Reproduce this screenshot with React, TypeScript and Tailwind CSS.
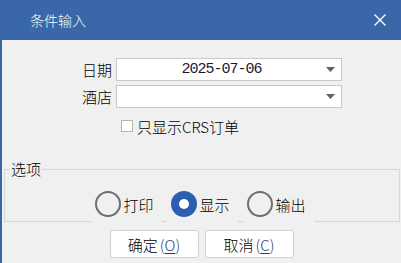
import React, { useState } from 'react';

const cjk = { fontFamily: '"Noto Sans CJK SC", "Noto Sans", sans-serif' };

// small filled triangle used by the combo boxes
const Caret = () => <svg width="9" height="5" viewBox="0 0 9 5" className="shrink-0">
    <path d="M0 0 H9 L4.5 5 Z" fill="#5f6360" />
  </svg>;

interface ComboProps {
  value?: string;
}
const Combo: React.FC<ComboProps> = ({ value }) => <div className="flex h-[23px] w-[226px] items-center border border-[#c8c8c8] bg-white pr-[6px]">
    <div className="flex-1 text-center text-[15px] font-normal leading-none tracking-[-1px] text-[#1a1a2e]" style={{ fontFamily: '"Liberation Mono", monospace' }}>
      {value}
    </div>
    <Caret />
  </div>;

interface RadioProps {
  label: string;
  checked: boolean;
  onClick: () => void;
}
const Radio: React.FC<RadioProps> = ({ label, checked, onClick }) => <div onClick={onClick} className="flex h-[36px] w-[71px] cursor-default items-center bg-[#f0f0f0] pl-[4px]">
    {checked ? <div className="flex h-[26px] w-[26px] items-center justify-center rounded-full bg-[#2c5fb1]">
        <div className="h-[10px] w-[10px] rounded-full bg-white" />
      </div> : <div className="h-[26px] w-[26px] rounded-full border-2 border-[#6e6e6e] bg-[#f0f0f0]" />}
    <span className="ml-[3px] text-[15px] leading-none text-black">{label}</span>
  </div>;

export default function App() {
  const [mode, setMode] = useState('display');
  const [crsOnly, setCrsOnly] = useState(false);
  return <div className="h-[263px] w-[401px] overflow-hidden border-l-2 border-[#3a67a8] bg-[#f0f0f0] font-light select-none" style={cjk}>
      {/* Title bar */}
      <div className="flex h-[40px] items-center justify-between bg-[#3a67a8] pl-[28px] pr-[15px]">
        <span className="text-[14px] text-white">条件输入</span>
        <svg width="12" height="12" viewBox="0 0 12 12">
          <path d="M0.5 0.5 L11.5 11.5 M11.5 0.5 L0.5 11.5" stroke="white" strokeWidth="1.4" />
        </svg>
      </div>

      {/* Filters */}
      <div className="flex flex-col gap-[4px] pt-[18px]">
        <div className="flex items-center">
          <span className="w-[111px] pr-[1px] text-right text-[15px] leading-none text-black">日期</span>
          <div className="ml-[3px]"><Combo value="2025-07-06" /></div>
        </div>
        <div className="flex items-center">
          <span className="w-[111px] pr-[1px] text-right text-[15px] leading-none text-black">酒店</span>
          <div className="ml-[3px]"><Combo /></div>
        </div>
      </div>
      <div className="mt-[10px] flex h-[16px] items-center pl-[119px]" onClick={() => setCrsOnly(!crsOnly)}>
        <div className="flex h-[12px] w-[12px] items-center justify-center border border-[#b4b4b4] bg-white text-[10px] leading-none text-[#333]">
          {crsOnly ? '✓' : ''}
        </div>
        <span className="ml-[4px] text-[15px] leading-none text-black">只显示CRS订单</span>
      </div>

      {/* Options group */}
      <fieldset className="ml-[2px] mr-[1px] mt-[26px] border border-[#d6d6d6]">
        <legend className="ml-[5px] px-[1px] text-[15px] leading-[18px] text-black">选项</legend>
        <div className="mb-[-1px] mt-[8px] flex justify-center gap-[5px]">
          <Radio label="打印" checked={mode === 'print'} onClick={() => setMode('print')} />
          <Radio label="显示" checked={mode === 'display'} onClick={() => setMode('display')} />
          <Radio label="输出" checked={mode === 'export'} onClick={() => setMode('export')} />
        </div>
      </fieldset>

      {/* Buttons */}
      <div className="mt-[8px] flex justify-center gap-[6px]">
        <button className="flex h-[28px] w-[89px] items-center justify-center rounded-[3px] border border-[#cfcfcf] bg-white text-[15px] leading-none text-black">
          确定<span className="ml-[2px] text-[#1f3a78]">(<span className="underline underline-offset-2">O</span>)</span>
        </button>
        <button className="flex h-[28px] w-[89px] items-center justify-center rounded-[3px] border border-[#cfcfcf] bg-white text-[15px] leading-none text-black">
          取消<span className="ml-[2px] text-[#1f3a78]">(<span className="underline underline-offset-2">C</span>)</span>
        </button>
      </div>
    </div>;
}
